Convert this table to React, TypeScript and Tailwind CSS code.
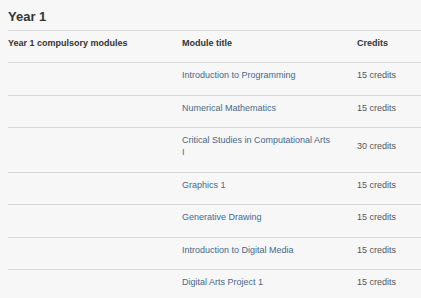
import React from "react";

const modules = [
  { title: "Introduction to Programming", credits: "15 credits" },
  { title: "Numerical Mathematics", credits: "15 credits" },
  { title: "Critical Studies in Computational Arts I", credits: "30 credits" },
  { title: "Graphics 1", credits: "15 credits" },
  { title: "Generative Drawing", credits: "15 credits" },
  { title: "Introduction to Digital Media", credits: "15 credits" },
  { title: "Digital Arts Project 1", credits: "15 credits" },
];

const App: React.FC = () => {
  return (
    <div className="min-h-screen w-full bg-[#f7f7f7] pl-2 font-['Liberation_Sans',Arial,sans-serif] text-[#333]">
      <h2 className="pt-[9px] pb-[5px] text-[13px] leading-[16px] font-bold">Year 1</h2>

      <table className="w-full border-collapse text-[9px] leading-[12px]">
        <thead>
          <tr className="border-t border-[#d9d9d9]">
            <th className="w-[174px] pt-[6px] pb-[13px] text-left font-bold align-middle">
              Year 1 compulsory modules
            </th>
            <th className="w-[175px] pt-[6px] pb-[13px] text-left font-bold align-middle">
              Module title
            </th>
            <th className="pt-[6px] pb-[13px] text-left font-bold align-middle">Credits</th>
          </tr>
        </thead>
        <tbody>
          {modules.map((m) => (
            <tr key={m.title} className="border-t border-[#d9d9d9]">
              <td className="pt-[6px] pb-[13.5px]" />
              <td className="pt-[6px] pb-[13.5px] pr-[22px] align-middle text-[#45698c]">{m.title}</td>
              <td className="pt-[6px] pb-[13.5px] align-middle text-[#555]">{m.credits}</td>
            </tr>
          ))}
        </tbody>
      </table>
    </div>
  );
};

export default App;
